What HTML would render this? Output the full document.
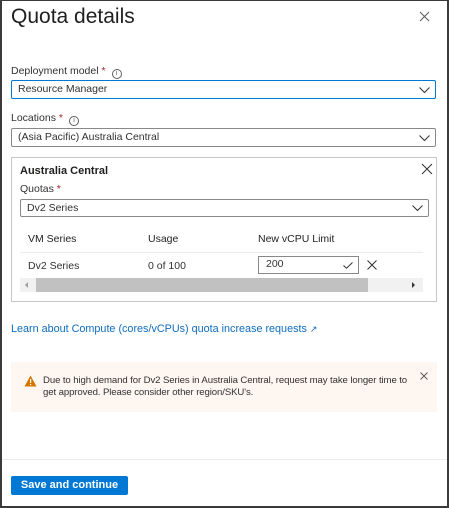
<!DOCTYPE html>
<html><head><style>
*{box-sizing:border-box;margin:0;padding:0}
body{width:449px;height:508px;overflow:hidden;background:#fff;font-family:"Liberation Sans",sans-serif;color:#323130;font-size:11px;position:relative}
.frame{position:absolute;left:0;top:0;width:449px;height:508px;border:2px solid #3a3a3a;border-top:1px solid #3a3a3a}
.a{position:absolute;white-space:nowrap}
.sel{position:absolute;border:1px solid #8a8886;border-radius:2px;background:#fff;padding-left:6px;line-height:17px;font-size:10.5px}
.chev{position:absolute;right:5px;top:6px}
.req{color:#a4262c}
.info{display:inline-block;width:10px;height:10px;border:1px solid #605e5c;border-radius:50%;font-size:7px;line-height:8px;text-align:center;margin-left:6px;vertical-align:-1px;color:#605e5c}
</style></head><body>
<div class="frame"></div>
<div class="a" style="left:11px;top:5px;font-size:21px;color:#201f1e">Quota details</div>
<svg class="a" style="left:419px;top:11px" width="11" height="11"><path d="M1 1L10 10M10 1L1 10" stroke="#605e5c" stroke-width="1.1"/></svg>

<div class="a" style="left:11px;top:65px;font-size:10.5px">Deployment model <span class="req">*</span><span class="info">i</span></div>
<div class="sel" style="left:11px;top:80px;width:425px;height:19px;border:1.5px solid #0078d4">Resource Manager<svg class="chev" width="11" height="7"><path d="M0.5 0.5L5.5 5.5L10.5 0.5" stroke="#323130" fill="none"/></svg></div>

<div class="a" style="left:11px;top:112px;font-size:10.5px">Locations <span class="req">*</span><span class="info">i</span></div>
<div class="sel" style="left:11px;top:128px;width:425px;height:19px">(Asia Pacific) Australia Central<svg class="chev" width="11" height="7"><path d="M0.5 0.5L5.5 5.5L10.5 0.5" stroke="#323130" fill="none"/></svg></div>

<div class="a" style="left:11px;top:157px;width:426px;height:145px;border:1px solid #c8c6c4"></div>
<div class="a" style="left:20px;top:165px;font-weight:bold;color:#201f1e">Australia Central</div>
<svg class="a" style="left:421px;top:163px" width="12" height="12"><path d="M1 1L11 11M11 1L1 11" stroke="#323130" stroke-width="1"/></svg>
<div class="a" style="left:20px;top:183px;font-size:10.5px">Quotas <span class="req">*</span></div>
<div class="sel" style="left:20px;top:199px;width:409px;height:18px;line-height:16px">Dv2 Series<svg class="chev" width="11" height="7" style="top:5px"><path d="M0.5 0.5L5.5 5.5L10.5 0.5" stroke="#323130" fill="none"/></svg></div>
<div class="a" style="left:28px;top:233px;color:#201f1e;font-size:10.5px">VM Series</div>
<div class="a" style="left:148px;top:233px;color:#201f1e;font-size:10.5px">Usage</div>
<div class="a" style="left:258px;top:233px;color:#201f1e;font-size:10.5px">New vCPU Limit</div>
<div class="a" style="left:20px;top:252px;width:403px;height:1px;background:#edebe9"></div>
<div class="a" style="left:28px;top:260px;font-size:10.5px">Dv2 Series</div>
<div class="a" style="left:148px;top:260px;font-size:10.5px">0 of 100</div>
<div class="a" style="left:258px;top:256px;width:101px;height:18px;border:1px solid #8a8886;padding-left:7px;line-height:15px;font-size:10.5px">200<svg style="position:absolute;right:5px;top:5px" width="10" height="7"><path d="M0.5 3.5L3.5 6.2L9.5 0.5" stroke="#323130" fill="none"/></svg></div>
<svg class="a" style="left:367px;top:260px" width="10" height="10"><path d="M0.5 0.5L9.5 9.5M9.5 0.5L0.5 9.5" stroke="#323130"/></svg>
<div class="a" style="left:20px;top:278px;width:403px;height:14px;background:#f1f1f1"></div>
<div class="a" style="left:36px;top:278px;width:332px;height:14px;background:#c1c1c1"></div>
<div class="a" style="left:25px;top:282px;width:0;height:0;border-top:3px solid transparent;border-bottom:3px solid transparent;border-right:3px solid #a0a0a0"></div>
<div class="a" style="left:412px;top:282px;width:0;height:0;border-top:3px solid transparent;border-bottom:3px solid transparent;border-left:3px solid #333"></div>

<div class="a" style="left:11px;top:323px;color:#0f6cbd;font-size:10.8px">Learn about Compute (cores/vCPUs) quota increase requests <span style="font-size:9px">↗</span></div>

<div class="a" style="left:11px;top:362px;width:426px;height:50px;background:#fdf6f1"></div>
<svg class="a" style="left:24px;top:375px" width="13" height="12"><path d="M6.5 0.5L12.5 11.5H0.5Z" fill="#d47500"/><rect x="6" y="4" width="1.2" height="4" fill="#fff"/><rect x="6" y="9" width="1.2" height="1.2" fill="#fff"/></svg>
<div class="a" style="left:43px;top:375px;line-height:12px;color:#323130;font-size:9.6px;letter-spacing:-0.1px">Due to high demand for Dv2 Series in Australia Central, request may take longer time to<br>get approved. Please consider other region/SKU's.</div>
<svg class="a" style="left:420px;top:372px" width="8" height="8"><path d="M0.5 0.5L7.5 7.5M7.5 0.5L0.5 7.5" stroke="#605e5c"/></svg>

<div class="a" style="left:2px;top:459px;width:445px;height:1px;background:#edebe9"></div>
<div class="a" style="left:11px;top:476px;width:117px;height:19px;background:#0078d4;border-radius:2px;color:#fff;font-weight:bold;text-align:center;line-height:19px">Save and continue</div>
</body></html>
